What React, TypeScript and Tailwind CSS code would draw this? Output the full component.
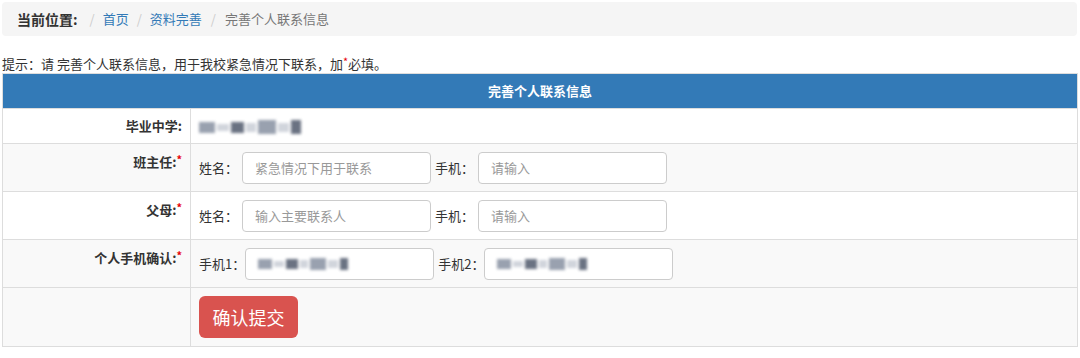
import React from "react";

const font = { fontFamily: '"Microsoft YaHei", "Noto Sans CJK SC", "Liberation Sans", sans-serif' };

function Blur({ scale = 1 }: { scale?: number }) {
  const blocks = [
    [14, 10, "bg-gray-400"],
    [10, 6, "bg-gray-300"],
    [12, 10, "bg-gray-500"],
    [8, 8, "bg-gray-300"],
    [16, 12, "bg-gray-400"],
    [10, 8, "bg-gray-300"],
    [8, 12, "bg-gray-500"],
  ] as const;
  return (
    <span className="inline-flex items-center gap-[2px] blur-[1.5px]">
      {blocks.map(([w, h, c], i) => (
        <span key={i} className={c} style={{ width: w * scale, height: h * scale }} />
      ))}
    </span>
  );
}

function Field({ label, placeholder, blurred }: { label: string; placeholder?: string; blurred?: boolean }) {
  return (
    <div className="flex items-center">
      <span className={blurred ? "text-[13px] text-[#333]" : "mr-[4px] text-[13px] text-[#333]"}>{label}</span>
      <div className="flex h-[32px] w-[189px] items-center rounded border border-[#ccc] bg-white px-[12px] text-[13px] text-[#999]">
        {blurred ? <Blur /> : placeholder}
      </div>
    </div>
  );
}

function Label({ text, req }: { text: string; req?: boolean }) {
  return (
    <td className="w-[188px] border border-[#ddd] px-[8px] pt-[8px] text-right align-top text-[13px] font-bold text-[#333]">
      {text}
      {req && <span className="relative -top-[3px] text-[11px] text-red-600">*</span>}
    </td>
  );
}

export default function App() {
  return (
    <div className="h-[358px] w-[1080px] bg-white" style={font}>
      <div className="mx-[2px] mt-[2px] flex h-[34px] w-[1075px] items-center rounded bg-[#f5f5f5] pl-[15px] text-[13px]">
        <span className="text-[14px] font-bold text-[#333]">当前位置:</span>
        <span className="ml-[12px] text-[#ccc]">/</span>
        <span className="ml-[8px] text-[#337ab7]">首页</span>
        <span className="mx-[8px] text-[#ccc]">/</span>
        <span className="text-[#337ab7]">资料完善</span>
        <span className="mx-[9px] text-[#ccc]">/</span>
        <span className="text-[#777]">完善个人联系信息</span>
      </div>
      <div className="mt-[19px] pl-[2px] text-[13px] leading-[17px] text-[#333]">
        提示：请 完善个人联系信息，用于我校紧急情况下联系，加<span className="relative -top-[3px] text-[11px] text-red-600">*</span>必填。
      </div>
      <table className="ml-[2px] w-[1076px] border-collapse">
        <tbody>
          <tr>
            <th colSpan={2} className="h-[35px] border border-[#ddd] bg-[#337ab7] text-center text-[13px] font-bold text-white">
              完善个人联系信息
            </th>
          </tr>
          <tr className="h-[35px] bg-white">
            <td className="w-[188px] border border-[#ddd] px-[8px] text-right align-middle text-[13px] font-bold text-[#333]">毕业中学:</td>
            <td className="border border-[#ddd] px-[8px]">
              <Blur scale={1.15} />
            </td>
          </tr>
          <tr className="h-[48px] bg-[#f9f9f9]">
            <Label text="班主任:" req />
            <td className="border border-[#ddd] px-[8px]">
              <div className="flex items-center gap-[4px]">
                <Field label="姓名：" placeholder="紧急情况下用于联系" />
                <Field label="手机：" placeholder="请输入" />
              </div>
            </td>
          </tr>
          <tr className="h-[48px] bg-white">
            <Label text="父母:" req />
            <td className="border border-[#ddd] px-[8px]">
              <div className="flex items-center gap-[4px]">
                <Field label="姓名：" placeholder="输入主要联系人" />
                <Field label="手机：" placeholder="请输入" />
              </div>
            </td>
          </tr>
          <tr className="h-[48px] bg-[#f9f9f9]">
            <Label text="个人手机确认:" req />
            <td className="border border-[#ddd] px-[8px]">
              <div className="flex items-center gap-[4px]">
                <Field label="手机1：" blurred />
                <Field label="手机2：" blurred />
              </div>
            </td>
          </tr>
          <tr className="h-[59px] bg-[#f9f9f9]">
            <td className="border border-[#ddd]" />
            <td className="border border-[#ddd] px-[8px]">
              <button className="h-[42px] w-[99px] rounded-md bg-[#d9534f] text-[18px] text-white">确认提交</button>
            </td>
          </tr>
        </tbody>
      </table>
    </div>
  );
}
